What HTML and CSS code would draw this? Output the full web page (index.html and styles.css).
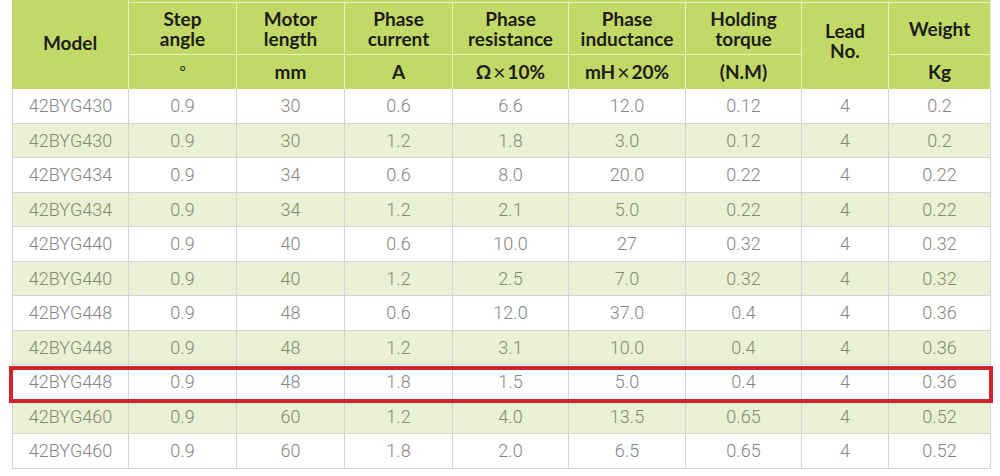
FILE: index.html
```html
<!DOCTYPE html>
<html>
<head>
<meta charset="utf-8">
<link rel="stylesheet" href="styles.css">
</head>
<body>
<div class="sheet">
  <div class="head">
    <div class="hc model">Model</div>
    <div class="strip"></div>
    <div class="hc t2">Step<br>angle</div>
    <div class="hc deg">°</div>
    <div class="hc">Motor<br>length</div>
    <div class="hc">mm</div>
    <div class="hc">Phase<br>current</div>
    <div class="hc">A</div>
    <div class="hc">Phase<br>resistance</div>
    <div class="hc">Ω<span class="x">×</span>10%</div>
    <div class="hc">Phase<br>inductance</div>
    <div class="hc">mH<span class="x">×</span>20%</div>
    <div class="hc">Holding<br>torque</div>
    <div class="hc">(N.M)</div>
    <div class="hc lead">Lead<br>No.</div>
    <div class="hc one">Weight</div>
    <div class="hc">Kg</div>
  </div>
  <div class="body">
    <div class="row"><div>42BYG430</div><div>0.9</div><div>30</div><div>0.6</div><div>6.6</div><div>12.0</div><div>0.12</div><div>4</div><div>0.2</div></div>
    <div class="row alt"><div>42BYG430</div><div>0.9</div><div>30</div><div>1.2</div><div>1.8</div><div>3.0</div><div>0.12</div><div>4</div><div>0.2</div></div>
    <div class="row"><div>42BYG434</div><div>0.9</div><div>34</div><div>0.6</div><div>8.0</div><div>20.0</div><div>0.22</div><div>4</div><div>0.22</div></div>
    <div class="row alt"><div>42BYG434</div><div>0.9</div><div>34</div><div>1.2</div><div>2.1</div><div>5.0</div><div>0.22</div><div>4</div><div>0.22</div></div>
    <div class="row"><div>42BYG440</div><div>0.9</div><div>40</div><div>0.6</div><div>10.0</div><div>27</div><div>0.32</div><div>4</div><div>0.32</div></div>
    <div class="row alt"><div>42BYG440</div><div>0.9</div><div>40</div><div>1.2</div><div>2.5</div><div>7.0</div><div>0.32</div><div>4</div><div>0.32</div></div>
    <div class="row"><div>42BYG448</div><div>0.9</div><div>48</div><div>0.6</div><div>12.0</div><div>37.0</div><div>0.4</div><div>4</div><div>0.36</div></div>
    <div class="row alt"><div>42BYG448</div><div>0.9</div><div>48</div><div>1.2</div><div>3.1</div><div>10.0</div><div>0.4</div><div>4</div><div>0.36</div></div>
    <div class="row hl"><div>42BYG448</div><div>0.9</div><div>48</div><div>1.8</div><div>1.5</div><div>5.0</div><div>0.4</div><div>4</div><div>0.36</div></div>
    <div class="row alt"><div>42BYG460</div><div>0.9</div><div>60</div><div>1.2</div><div>4.0</div><div>13.5</div><div>0.65</div><div>4</div><div>0.52</div></div>
    <div class="row"><div>42BYG460</div><div>0.9</div><div>60</div><div>1.8</div><div>2.0</div><div>6.5</div><div>0.65</div><div>4</div><div>0.52</div></div>
  </div>
</div>
</body>
</html>
```

FILE: styles.css
```css
html, body {
  margin: 0;
  padding: 0;
  background: #ffffff;
}

.sheet {
  margin-left: 12px;
  width: 979px;
}

.head {
  display: grid;
  grid-template-columns: 116px 107px 107px 107px 115px 116px 115px 86px 101px;
  grid-template-rows: 2px 51px 34px;
  grid-auto-flow: column;
  column-gap: 1px;
  row-gap: 1px;
  padding-right: 1px;
  background: #eaf2bd;
  font-family: Lato, "Open Sans", sans-serif;
  font-weight: 700;
  font-size: 19px;
  line-height: 20px;
  color: #1d1d1b;
}

.hc {
  background: #c2d967;
  display: flex;
  align-items: center;
  justify-content: center;
  text-align: center;
}

.x {
  font-size: 21px;
  font-weight: 400;
  margin: 0 2px;
}

.strip {
  background: #c2d967;
  grid-column: 2 / 10;
  grid-row: 1;
}

.model {
  grid-column: 1;
  grid-row: 1 / 4;
  padding-bottom: 4px;
}

.t2 {
  grid-column: 2;
  grid-row: 2;
}

.deg {
  font-weight: 400;
  font-size: 15px;
  align-items: flex-start;
  padding-top: 6px;
}

.lead {
  grid-column: 8;
  grid-row: 2 / 4;
  padding-bottom: 10px;
}

.one {
  grid-column: 9;
  grid-row: 2;
}

.body {
  border-left: 1px solid #d2d2d2;
  font-family: Roboto, "DejaVu Sans", sans-serif;
  font-weight: 300;
  font-size: 18px;
  color: #858585;
}

.row {
  display: grid;
  grid-template-columns: 115px 107px 107px 107px 115px 116px 115px 86px 101px;
  column-gap: 1px;
  padding-right: 1px;
  padding-bottom: 1px;
  height: 34.5px;
  box-sizing: border-box;
  background: #d4d4d4;
  position: relative;
}

.row > div {
  background: #ffffff;
  display: flex;
  align-items: center;
  justify-content: center;
}

.row.alt > div {
  background: #ebf1d4;
  color: #848a70;
}

.hl {
  z-index: 1;
}

.hl::after {
  content: "";
  position: absolute;
  left: -4px;
  right: -2px;
  top: 1px;
  bottom: -3.5px;
  border: 4px solid #d3232d;
  pointer-events: none;
}
```
